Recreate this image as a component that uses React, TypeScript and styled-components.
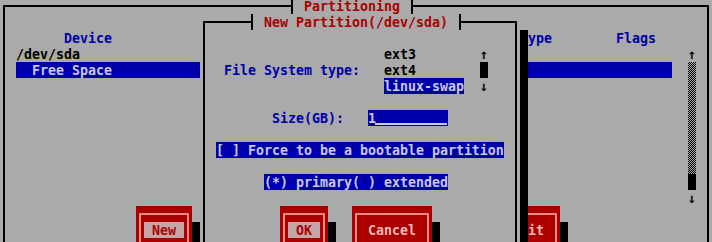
import styled, { createGlobalStyle, css } from 'styled-components';

// text-mode palette
const GRAY = '#aaaaaa';
const BLUE = '#0000aa';
const RED = '#aa0000';
const PINK = '#ee8a8a';
const PINK_TEXT = '#f4b8b8';
const LIGHT = '#c8c8f0';

const GlobalStyle = createGlobalStyle`
  html, body {
    margin: 0;
    padding: 0;
    background: ${GRAY};
    overflow: hidden;
  }
  body {
    width: 712px;
    height: 242px;
  }
`;

// every part sits on the 8x16 character grid
type Place = { $col: number; $row: number; $w?: number; $h?: number };

const place = css<Place>`
  grid-column: ${(p) => p.$col} / span ${(p) => p.$w ?? 1};
  grid-row: ${(p) => p.$row} / span ${(p) => p.$h ?? 1};
`;

// line-height is 2px taller than the row so glyphs sit 1px lower, like the VGA font
const Screen = styled.main`
  display: grid;
  grid-template-columns: repeat(89, 8px);
  grid-auto-rows: 16px;
  margin-top: -2px;
  font-family: 'DejaVu Sans Mono', 'Liberation Mono', monospace;
  font-size: 13.29px;
  font-weight: bold;
  line-height: 18px;
  white-space: pre;
`;

const Window = styled.section<Place>`
  ${place}
  position: relative;
  z-index: 0;
  display: grid;
  grid-template-columns: repeat(${(p) => p.$w}, 8px);
  grid-auto-rows: 16px;
  background: ${GRAY};

  &::before {
    content: '';
    position: absolute;
    left: 3px;
    right: 3px;
    top: 7px;
    bottom: -40px;
    border: 2px solid #000;
  }
`;

const Dialog = styled(Window)`
  z-index: 1;
  box-shadow: 8px 16px 0 #000;
`;

const Title = styled.h1<Place>`
  ${place}
  position: relative;
  z-index: 1;
  display: flex;
  height: 16px;
  margin: 0;
  font: inherit;
  color: ${RED};
  background: ${GRAY};
`;

const Tick = styled.span<{ $side: 'left' | 'right' }>`
  flex: none;
  width: 8px;
  height: 16px;
  background:
    linear-gradient(#000, #000) center / 2px 100% no-repeat,
    linear-gradient(#000, #000) ${(p) => p.$side} center / 50% 2px no-repeat;
`;

const Label = styled.span<Place & { $tone?: 'blue' | 'black' }>`
  ${place}
  color: ${(p) => (p.$tone === 'blue' ? BLUE : '#000')};
`;

const Selected = styled.span<Place>`
  ${place}
  height: 16px;
  background: ${BLUE};
  color: ${LIGHT};
`;

// entry field: the empty part is drawn as an underline
const Entry = styled(Selected)`
  background:
    linear-gradient(${LIGHT}, ${LIGHT}) 7px 13px / calc(100% - 8px) 2px no-repeat,
    ${BLUE};
`;

const Arrow = styled.span<Place>`
  ${place}
  color: #000;
  text-align: center;
`;

const Trough = styled.span<Place>`
  ${place}
  background: repeating-conic-gradient(#000 0 25%, ${GRAY} 0 50%) 0 0 / 2px 2px;
`;

const Thumb = styled.span<Place>`
  ${place}
  background: #000;
`;

const Button = styled.button<Place>`
  ${place}
  position: relative;
  display: grid;
  grid-template-rows: repeat(3, 16px);
  width: 100%;
  height: 100%;
  margin: 0;
  padding: 0 8px;
  border: 0;
  background: ${RED};
  box-shadow: 8px 16px 0 #000;
  font: inherit;
  line-height: 18px;

  &::before {
    content: '';
    position: absolute;
    left: 3px;
    right: 3px;
    top: 7px;
    bottom: 7px;
    border: 2px solid ${PINK};
  }
`;

const ButtonText = styled.span<{ $focus?: boolean }>`
  grid-row: 2;
  height: 16px;
  text-align: center;
  color: ${(p) => (p.$focus ? RED : PINK_TEXT)};
  background: ${(p) => (p.$focus ? '#c4a6a6' : 'transparent')};
`;

function WindowTitle({ text, col, w }: { text: string; col: number; w: number }) {
  return (
    <Title $col={col} $row={1} $w={w}>
      <Tick $side="left" />
      <span>{` ${text} `}</span>
      <Tick $side="right" />
    </Title>
  );
}

export default function App() {
  return (
    <>
      <GlobalStyle />
      <Screen>
        <Window $col={1} $row={1} $w={89} $h={16}>
          <WindowTitle text="Partitioning" col={37} w={16} />
          <Label $col={9} $row={3} $w={6} $tone="blue">Device</Label>
          <Label $col={66} $row={3} $w={4} $tone="blue">Type</Label>
          <Label $col={78} $row={3} $w={5} $tone="blue">Flags</Label>
          <Label $col={3} $row={4} $w={8}>/dev/sda</Label>
          <Selected $col={3} $row={5} $w={82}>{'  Free Space'}</Selected>

          <Arrow $col={87} $row={4}>↑</Arrow>
          <Trough $col={87} $row={5} $h={7} />
          <Thumb $col={87} $row={12} />
          <Arrow $col={87} $row={13}>↓</Arrow>

          <Button type="button" $col={18} $row={14} $w={7} $h={3}>
            <ButtonText $focus>New</ButtonText>
          </Button>
          <Button type="button" $col={63} $row={14} $w={8} $h={3}>
            <ButtonText>Edit</ButtonText>
          </Button>
        </Window>

        <Dialog $col={26} $row={2} $w={40} $h={15}>
          <WindowTitle text="New Partition(/dev/sda)" col={7} w={27} />

          <Label $col={24} $row={3} $w={4}>ext3</Label>
          <Label $col={4} $row={4} $w={17} $tone="blue">File System type:</Label>
          <Label $col={24} $row={4} $w={4}>ext4</Label>
          <Selected $col={24} $row={5} $w={10}>linux-swap</Selected>
          <Arrow $col={36} $row={3}>↑</Arrow>
          <Thumb $col={36} $row={4} />
          <Arrow $col={36} $row={5}>↓</Arrow>

          <Label $col={10} $row={7} $w={9} $tone="blue">Size(GB):</Label>
          <Entry $col={22} $row={7} $w={10}>1</Entry>

          <Selected $col={3} $row={9} $w={36}>[ ] Force to be a bootable partition</Selected>
          <Selected $col={9} $row={11} $w={23}>(*) primary( ) extended</Selected>

          <Button type="button" $col={11} $row={13} $w={6} $h={3}>
            <ButtonText $focus>OK</ButtonText>
          </Button>
          <Button type="button" $col={20} $row={13} $w={10} $h={3}>
            <ButtonText>Cancel</ButtonText>
          </Button>
        </Dialog>
      </Screen>
    </>
  );
}
